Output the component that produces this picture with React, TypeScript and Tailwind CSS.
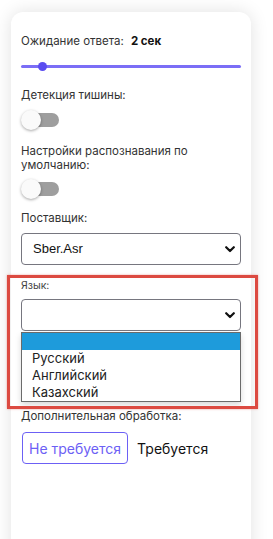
import React from "react"

const font = { fontFamily: "Inter, 'Noto Sans', sans-serif" }

function Toggle() {
  return (
    <div className="relative h-5 w-[40px]">
      <div className="absolute left-[2px] top-[3px] h-[14px] w-[36px] rounded-full bg-[#9e9e9e]" />
      <div className="absolute left-0 top-0 h-5 w-5 rounded-full bg-[#fafafa] shadow-[0_1px_3px_rgba(0,0,0,0.35)]" />
    </div>
  )
}

function Chevron() {
  return (
    <svg width="10" height="7" viewBox="0 0 10 7" className="shrink-0">
      <path d="M1.2 1.2 L5 5 L8.8 1.2" fill="none" stroke="#111" strokeWidth="2.2" strokeLinecap="round" strokeLinejoin="round" />
    </svg>
  )
}

function Select({ value }: { value: string }) {
  return (
    <div className="flex h-8 items-center justify-between rounded-[4px] border border-[#76767f] pl-[11px] pr-[5px]">
      <span className="text-[13px] text-[#111]" style={{ fontFamily: "'Liberation Sans', Arial, sans-serif" }}>
        {value}
      </span>
      <Chevron />
    </div>
  )
}

export default function App() {
  return (
    <div className="relative h-[539px] overflow-hidden bg-white pt-[12px]" style={font}>
      <div className="ml-[11px] min-h-[560px] w-[240px] rounded-t-[12px] bg-white px-[10px] pt-[22px] shadow-[0_0_18px_rgba(0,0,0,0.12)]">
        {/* Ожидание */}
        <div className="flex h-4 items-center text-[11.5px] text-[#333]">
          <span>Ожидание ответа:</span>
          <span className="ml-[7px] font-bold text-[#111]">2 сек</span>
        </div>
        <div className="relative mt-2 h-4">
          <div className="absolute left-0 right-0 top-[7px] h-[3px] rounded-full bg-[#7b6ef6]" />
          <div className="absolute left-[17px] top-[4px] h-[9px] w-[9px] rounded-full bg-[#5a4cf0]" />
        </div>

        <div className="mt-[14px] flex h-4 items-center text-[11.5px] text-[#333]">Детекция тишины:</div>
        <div className="mt-[6px]">
          <Toggle />
        </div>

        <div className="mt-[14px] text-[11.5px] leading-[14px] text-[#333]">
          Настройки распознавания по
          <br />
          умолчанию:
        </div>
        <div className="mt-[7px]">
          <Toggle />
        </div>

        <div className="mt-3 flex h-4 items-center text-[11.5px] text-[#333]">Поставщик:</div>
        <div className="mt-[6px]">
          <Select value="Sber.Asr" />
        </div>

        <div className="mt-[14px] flex h-[14px] items-center text-[10.5px] text-[#444]">Язык:</div>
        <div className="mt-[6px]">
          <Select value="" />
        </div>
        <div className="mt-px border border-[#6b6b6b] bg-white text-[13px] text-[#222] shadow-[0_3px_6px_rgba(0,0,0,0.15)]">
          <div className="h-[17px] bg-[#1e9bdb]" />
          <div className="flex h-[17px] items-center pl-[10px]">Русский</div>
          <div className="flex h-[17px] items-center pl-[10px]">Английский</div>
          <div className="flex h-[17px] items-center pl-[10px]">Казахский</div>
        </div>

        <div className="mt-[7px] flex h-4 items-center text-[11.5px] text-[#333]">Дополнительная обработка:</div>
        <div className="mt-[7px] flex items-center gap-[9px] pl-px">
          <div className="flex h-8 items-center rounded-[4px] border border-[#6c60f5] px-[6px] text-[14px] text-[#6c60f5]">
            Не требуется
          </div>
          <div className="text-[14px] text-[#111]">Требуется</div>
        </div>
      </div>

      {/* highlight frame */}
      <div className="absolute left-[7px] top-[275px] h-[134px] w-[251px] border-[3px] border-[#dc4a41] shadow-[0_0_2px_rgba(220,74,65,0.5)]" />
    </div>
  )
}
